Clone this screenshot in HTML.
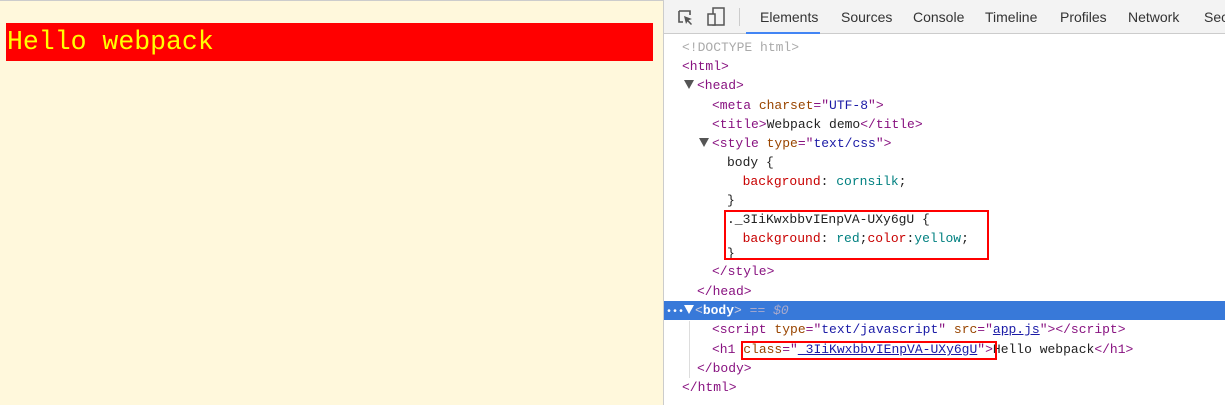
<!DOCTYPE html>
<html><head><meta charset="utf-8"><style>
body{margin:0;width:1225px;height:405px;overflow:hidden;position:relative;font-family:"Liberation Sans",sans-serif}
#left{position:absolute;left:0;top:0;width:663px;height:405px;background:#fff8dc;border-top:1px solid #ccc;box-sizing:border-box}
#h1{position:absolute;left:6px;top:22px;width:646px;height:38px;background:red;color:yellow;font-family:"Liberation Mono",monospace;font-size:26.5px;line-height:38px;padding-left:1px}
#dt{position:absolute;left:663px;top:0;width:562px;height:405px;background:#fff;border-left:1px solid #ccc;box-sizing:border-box}
#tb{position:absolute;left:0;top:0;width:562px;height:34px;background:#f3f3f3;border-bottom:1px solid #ccc;box-sizing:border-box}
.tab{position:absolute;top:9px;font-size:14px;color:#333}
#code{position:absolute;left:0;top:38px;width:562px;font-family:"Liberation Mono",monospace;font-size:13px}
.l{position:absolute;height:19px;line-height:19px;white-space:pre;color:#222}
.t{color:#881280}.a{color:#994500}.v{color:#1a1aa6}.g{color:#aaa}.p{color:#c80000}.c{color:#008080}
.tri{display:inline-block;width:0;height:0;border-left:5px solid transparent;border-right:5px solid transparent;border-top:9px solid #555;margin-right:3px;vertical-align:0px}
.box{position:absolute;border:2px solid red}
</style></head><body>
<div id="left"><div id="h1">Hello webpack</div></div>
<div id="dt">
<div id="tb">
<svg style="position:absolute;left:13px;top:9px" width="18" height="18" viewBox="0 0 18 18"><path d="M2 2h11v4M2 2v11h4" fill="none" stroke="#555" stroke-width="1.6"/><path d="M7 7l8 3-3.5 1.2L15 15l-1 1-3.5-3.5L9 15z" fill="#555"/></svg>
<svg style="position:absolute;left:43px;top:7px" width="20" height="20" viewBox="0 0 20 20"><rect x="6" y="1" width="11" height="17" fill="none" stroke="#555" stroke-width="1.5"/><rect x="1" y="7" width="7" height="11" fill="#f3f3f3" stroke="#555" stroke-width="1.5"/></svg>
<div style="position:absolute;left:75px;top:8px;width:1px;height:18px;background:#ccc"></div>
<span class="tab" style="left:96px">Elements</span>
<div style="position:absolute;left:82px;top:32px;width:74px;height:2px;background:#4285f4"></div>
<span class="tab" style="left:177px">Sources</span>
<span class="tab" style="left:249px">Console</span>
<span class="tab" style="left:321px">Timeline</span>
<span class="tab" style="left:396px">Profiles</span>
<span class="tab" style="left:464px">Network</span>
<span class="tab" style="left:540px">Sec</span>
</div>
<div id="code">
<div class="l g" style="left:18px;top:0">&lt;!DOCTYPE html&gt;</div>
<div class="l t" style="left:18px;top:19px">&lt;html&gt;</div>
<div class="l" style="left:20px;top:38px"><span class="tri"></span><span class="t">&lt;head&gt;</span></div>
<div class="l" style="left:48px;top:58px"><span class="t">&lt;meta </span><span class="a">charset</span><span class="t">="</span><span class="v">UTF-8</span><span class="t">"&gt;</span></div>
<div class="l" style="left:48px;top:77px"><span class="t">&lt;title&gt;</span>Webpack demo<span class="t">&lt;/title&gt;</span></div>
<div class="l" style="left:35px;top:96px"><span class="tri"></span><span class="t">&lt;style </span><span class="a">type</span><span class="t">="</span><span class="v">text/css</span><span class="t">"&gt;</span></div>
<div class="l" style="left:63px;top:115px">body {</div>
<div class="l" style="left:63px;top:134px">  <span class="p">background</span>: <span class="c">cornsilk</span>;</div>
<div class="l" style="left:63px;top:153px">}</div>
<div class="l" style="left:63px;top:172px">._3IiKwxbbvIEnpVA-UXy6gU {</div>
<div class="l" style="left:63px;top:191px">  <span class="p">background</span>: <span class="c">red</span>;<span class="p">color</span>:<span class="c">yellow</span>;</div>
<div class="l" style="left:63px;top:206px">}</div>
<div class="l t" style="left:48px;top:224px">&lt;/style&gt;</div>
<div class="l t" style="left:33px;top:244px">&lt;/head&gt;</div>
<div style="position:absolute;left:0;top:263px;width:562px;height:19px;background:#3879d9"></div>
<div class="l" style="left:2px;top:263px;color:#fff"><span style="font-size:10px">•••</span><span class="tri" style="border-top-color:#fff;margin-right:1px"></span><span style="color:#ccd">&lt;</span><b>body</b><span style="color:#ccd">&gt;</span> <span style="color:#aac">== <i>$0</i></span></div>
<div style="position:absolute;left:25px;top:283px;width:1px;height:57px;background:#ddd"></div>
<div class="l" style="left:48px;top:282px"><span class="t">&lt;script </span><span class="a">type</span><span class="t">="</span><span class="v">text/javascript</span><span class="t">" </span><span class="a">src</span><span class="t">="</span><span class="v" style="text-decoration:underline">app.js</span><span class="t">"&gt;&lt;/script&gt;</span></div>
<div class="l" style="left:48px;top:302px"><span class="t">&lt;h1 </span><span class="a">class</span><span class="t">="</span><span class="v" style="text-decoration:underline">_3IiKwxbbvIEnpVA-UXy6gU</span><span class="t">"&gt;</span>Hello webpack<span class="t">&lt;/h1&gt;</span></div>
<div class="l t" style="left:33px;top:321px">&lt;/body&gt;</div>
<div class="l t" style="left:18px;top:340px">&lt;/html&gt;</div>
</div>
<div class="box" style="left:60px;top:210px;width:261px;height:46px"></div>
<div class="box" style="left:77px;top:341px;width:252px;height:15px"></div>
</div>
</body></html>
